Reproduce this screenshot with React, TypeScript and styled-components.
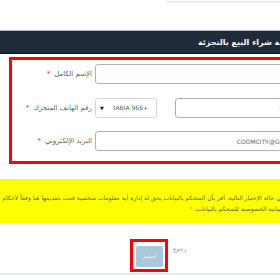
import React from 'react';
import styled, { createGlobalStyle } from 'styled-components';

const GlobalStyle = createGlobalStyle`
	*, *::before, *::after {
		box-sizing: border-box;
	}
	html, body {
		margin: 0;
		padding: 0;
		background: #ffffff;
		overflow: hidden;
	}
	body {
		font-family: "DejaVu Sans", "Noto Sans", sans-serif;
	}
	#root {
		width: 280px;
		height: 280px;
		overflow: hidden;
	}
`;

const Page = styled.div`
	width: 330px;
	display: flex;
	flex-direction: column;
`;

const TopCard = styled.div`
	margin-left: 167px;
	height: 2px;
	border: 1px solid #e4e4e4;
	border-top: none;
	border-bottom-left-radius: 4px;
	box-shadow: 0 1px 2px rgba(0, 0, 0, 0.06);
	margin-bottom: 28px;
`;

const Header = styled.div`
	height: 24px;
	background: #1f2a3a;
	border-top: 1px solid #a9b7c6;
	border-bottom: 1px solid #0c131c;
	display: flex;
	align-items: center;
	justify-content: flex-end;
	padding-right: 24px;
`;

const Title = styled.h1`
	margin: 0;
	direction: rtl;
	color: #ffffff;
	font-size: 8px;
	font-weight: bold;
	white-space: nowrap;
`;

const FormBox = styled.div`
	margin: 3px 0 0 9px;
	border: 3px solid #ff0000;
	border-right: none;
	padding: 4px 13px 10px 0;
	display: flex;
	flex-direction: column;
	gap: 13.5px;
`;

const Row = styled.div`
	display: flex;
	align-items: center;
	gap: 18px;
`;

const Label = styled.label`
	display: block;
	width: 80px;
	margin-right: -15px;
	flex-shrink: 0;
	direction: rtl;
	text-align: right;
	font-size: 7px;
	color: #5b6b5e;
	white-space: nowrap;
`;

const Star = styled.span`
	color: #ff3030;
	margin-right: 4px;
`;

const Field = styled.div<{ $width?: number }>`
	height: 20px;
	border: 1px solid #a7b8a7;
	border-radius: 3px;
	background: #ffffff;
	display: flex;
	align-items: center;
	justify-content: flex-end;
	padding: 0 6px;
	overflow: hidden;
	white-space: nowrap;
	font-size: 6px;
	color: #555f66;
	${(p) => (p.$width ? `width: ${p.$width}px; flex-shrink: 0;` : 'flex: 1;')}
`;

const Placeholder = styled.span`
	color: #9aa09a;
	direction: rtl;
`;

const SelectBox = styled.div`
	width: 62px;
	height: 20px;
	border: 1px solid #d2d6da;
	border-radius: 3px;
	display: flex;
	align-items: center;
	padding: 0 8px 0 4px;
	gap: 9px;
	flex-shrink: 0;
	font-size: 6px;
	color: #555f66;
	white-space: nowrap;
	overflow: hidden;
`;

const Caret = styled.span`
	font-size: 5px;
	color: #222;
	flex-shrink: 0;
`;

const SelectText = styled.div`
	flex: 1;
	overflow: hidden;
	display: flex;
	justify-content: flex-end;
`;

const PhoneRow = styled.div`
	display: flex;
	gap: 18px;
	flex: 1;
`;

const Notice = styled.div`
	margin-top: 15px;
	height: 44px;
	background: #ffff00;
	display: flex;
	flex-direction: column;
	justify-content: center;
	align-items: flex-end;
	padding: 4px 46px 0 0;
	gap: 4px;
	overflow: hidden;
`;

const NoticeLine = styled.p`
	margin: 0;
	direction: rtl;
	white-space: nowrap;
	font-size: 6px;
	color: #5f5f50;
`;

const Orange = styled.span`
	color: #f08a24;
`;

const Actions = styled.div`
	margin-top: 16px;
	display: flex;
	align-items: flex-start;
	padding-left: 130px;
	gap: 5px;
`;

const Highlight = styled.div`
	border: 3px solid #ff0000;
	padding: 1px 2px 2px 3px;
`;

const Button = styled.button`
	width: 27px;
	height: 21px;
	border: none;
	border-radius: 2px;
	background: #a9c8dc;
	color: #eef5fa;
	font-family: "DejaVu Sans", sans-serif;
	font-size: 5.5px;
	padding: 0;
	direction: rtl;
`;

const BackLink = styled.a`
	margin-top: 6px;
	font-size: 6px;
	color: #7f98b0;
	direction: rtl;
`;

const BottomRule = styled.div`
	margin-top: 1px;
	height: 2px;
	background: #e3e9ef;
`;

const App = () => {
	return (
		<Page>
			<GlobalStyle />
			<TopCard />
			<Header>
				<Title>مجموعة شراء البيع بالتجزئة</Title>
			</Header>
			<FormBox>
				<Row>
					<Label>
						الإسم الكامل<Star>*</Star>
					</Label>
					<Field>
						<Placeholder>محمد أحمد</Placeholder>
					</Field>
				</Row>
				<Row>
					<Label>
						رقم الهاتف المتحرك<Star>*</Star>
					</Label>
					<PhoneRow>
						<SelectBox>
							<Caret>▼</Caret>
							<SelectText>SAUDI ARABIA 966+</SelectText>
						</SelectBox>
						<Field $width={115}>5</Field>
					</PhoneRow>
				</Row>
				<Row>
					<Label>
						البريد الإلكتروني<Star>*</Star>
					</Label>
					<Field>COOMCITY@GMAIL.COM</Field>
				</Row>
			</FormBox>
			<Notice>
				<NoticeLine>
					في حالة الإختيار التالية، أقر بأن المتحكم بالبيانات يحق له إدارة أية معلومات شخصية قمت بتقديمها هنا وفقاً لأحكام
				</NoticeLine>
				<NoticeLine>
					البيانية الخصوصية للمتحكم بالبيانات، <Orange>*</Orange>
				</NoticeLine>
			</Notice>
			<Actions>
				<Highlight>
					<Button>استمر</Button>
				</Highlight>
				<BackLink>رجوع</BackLink>
			</Actions>
			<BottomRule />
		</Page>
	);
};

export default App;
